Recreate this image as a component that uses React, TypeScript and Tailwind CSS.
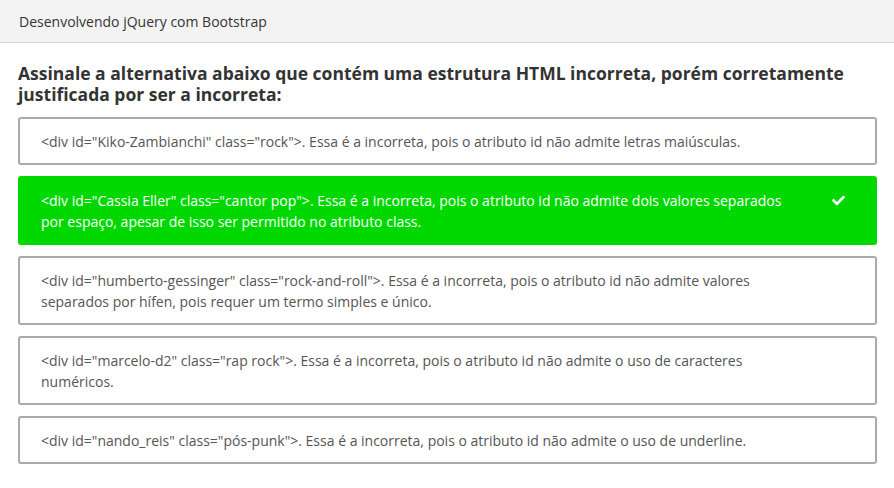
const options = [
  {
    text: '<div id="Kiko-Zambianchi" class="rock">. Essa é a incorreta, pois o atributo id não admite letras maiúsculas.',
    correct: false,
  },
  {
    text: '<div id="Cassia Eller" class="cantor pop">. Essa é a incorreta, pois o atributo id não admite dois valores separados por espaço, apesar de isso ser permitido no atributo class.',
    correct: true,
  },
  {
    text: '<div id="humberto-gessinger" class="rock-and-roll">. Essa é a incorreta, pois o atributo id não admite valores separados por hífen, pois requer um termo simples e único.',
    correct: false,
  },
  {
    text: '<div id="marcelo-d2" class="rap rock">. Essa é a incorreta, pois o atributo id não admite o uso de caracteres numéricos.',
    correct: false,
  },
  {
    text: '<div id="nando_reis" class="pós-punk">. Essa é a incorreta, pois o atributo id não admite o uso de underline.',
    correct: false,
  },
];

function Check() {
  return (
    <svg viewBox="0 0 512 512" className="w-[13px] h-[13px]" fill="currentColor">
      <path d="M173.898 439.404l-166.4-166.4c-9.997-9.997-9.997-26.206 0-36.204l36.203-36.204c9.997-9.998 26.207-9.998 36.204 0L192 312.69 432.095 72.596c9.997-9.997 26.207-9.997 36.204 0l36.203 36.204c9.997 9.997 9.997 26.206 0 36.204l-294.4 294.401c-9.998 9.997-26.207 9.997-36.204-.001z" />
    </svg>
  );
}

export default function App() {
  return (
    <div className="w-[894px] h-[488px] bg-white font-['Open_Sans',sans-serif] overflow-hidden">
      {/* Header */}
      <header className="h-[43px] bg-[#f3f3f3] border-b border-[#d6d6d6] flex items-center px-[19px]">
        <span className="text-[14px] text-[#333]">Desenvolvendo jQuery com Bootstrap</span>
      </header>

      <main className="px-[18px] pr-[17px] pt-[20px]">
        <h2 className="text-[17.5px] font-bold leading-[21px] text-[#333] mb-[12px]">
          Assinale a alternativa abaixo que contém uma estrutura HTML incorreta, porém corretamente justificada por ser a incorreta:
        </h2>

        <div className="flex flex-col gap-[11px]">
          {options.map((opt, i) => (
            <div
              key={i}
              className={
                opt.correct
                  ? 'flex items-start border-2 border-[#00d800] bg-[#00d800] rounded-[3px] pl-[21px] pt-[12px] pb-[11px] text-white'
                  : 'flex items-start border-2 border-[#a8abae] bg-white rounded-[3px] pl-[21px] pt-[12px] pb-[11px] text-[#555]'
              }
            >
              <p className="text-[14px] leading-[21px] max-w-[762px] flex-1">{opt.text}</p>
              <div className="w-[75px] flex justify-end pr-[30px] pt-[4px]">
                {opt.correct && <Check />}
              </div>
            </div>
          ))}
        </div>
      </main>
    </div>
  );
}
